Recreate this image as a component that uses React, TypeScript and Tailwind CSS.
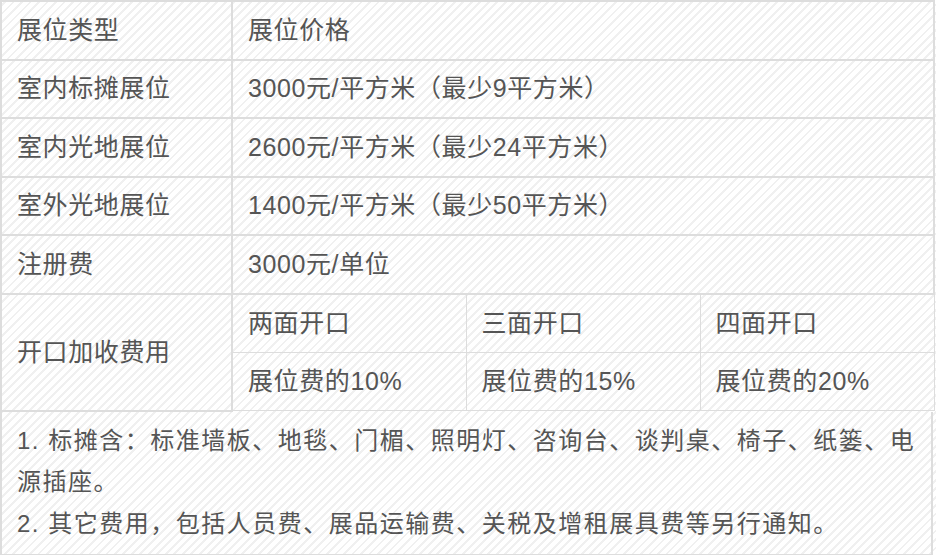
import React from 'react';

const priceRows = [
  { type: '室内标摊展位', price: '3000元/平方米（最少9平方米）' },
  { type: '室内光地展位', price: '2600元/平方米（最少24平方米）' },
  { type: '室外光地展位', price: '1400元/平方米（最少50平方米）' },
  { type: '注册费', price: '3000元/单位' },
];

const openings = [
  { name: '两面开口', fee: '展位费的10%' },
  { name: '三面开口', fee: '展位费的15%' },
  { name: '四面开口', fee: '展位费的20%' },
];

const cell = 'border-2 border-[#dddddd] px-[15px] align-middle';
const subCell = 'border border-[#dddddd] px-[15px] align-middle';

export default function App() {
  return (
    <div
      className="w-[936px] h-[555px] overflow-hidden bg-white bg-[image:repeating-linear-gradient(135deg,#ffffff_0px,#ffffff_4px,#f0f0f0_4px,#f0f0f0_6px)] text-[#555555] text-[25px] leading-none"
      style={{ fontFamily: '"Liberation Sans", "Noto Sans CJK SC", sans-serif' }}
    >
      <table className="w-[933px] table-fixed border-collapse tracking-[0.6px]">
        <colgroup>
          <col className="w-[231px]" />
          <col className="w-[234px]" />
          <col className="w-[234px]" />
          <col className="w-[234px]" />
        </colgroup>
        <tbody>
          <tr className="h-[58.5px]">
            <td className={cell}>展位类型</td>
            <td className={cell} colSpan={3}>展位价格</td>
          </tr>
          {priceRows.map((row) => (
            <tr key={row.type} className="h-[58.5px]">
              <td className={cell}>{row.type}</td>
              <td className={cell} colSpan={3}>{row.price}</td>
            </tr>
          ))}
          <tr className="h-[58.5px]">
            <td className={cell} rowSpan={2}>开口加收费用</td>
            {openings.map((o) => (
              <td key={o.name} className={subCell}>{o.name}</td>
            ))}
          </tr>
          <tr className="h-[58.5px]">
            {openings.map((o) => (
              <td key={o.fee} className={subCell}>{o.fee}</td>
            ))}
          </tr>
        </tbody>
      </table>

      {/* notes under the table */}
      <div className="w-[933px] border-2 border-t-0 border-[#dddddd] pl-[15px] pr-[10px] pt-[8px] pb-[10px] text-[24px] leading-[41.5px] tracking-[1.5px]">
        <p>1. 标摊含：标准墙板、地毯、门楣、照明灯、咨询台、谈判桌、椅子、纸篓、电源插座。</p>
        <p>2. 其它费用，包括人员费、展品运输费、关税及增租展具费等另行通知。</p>
      </div>
    </div>
  );
}
